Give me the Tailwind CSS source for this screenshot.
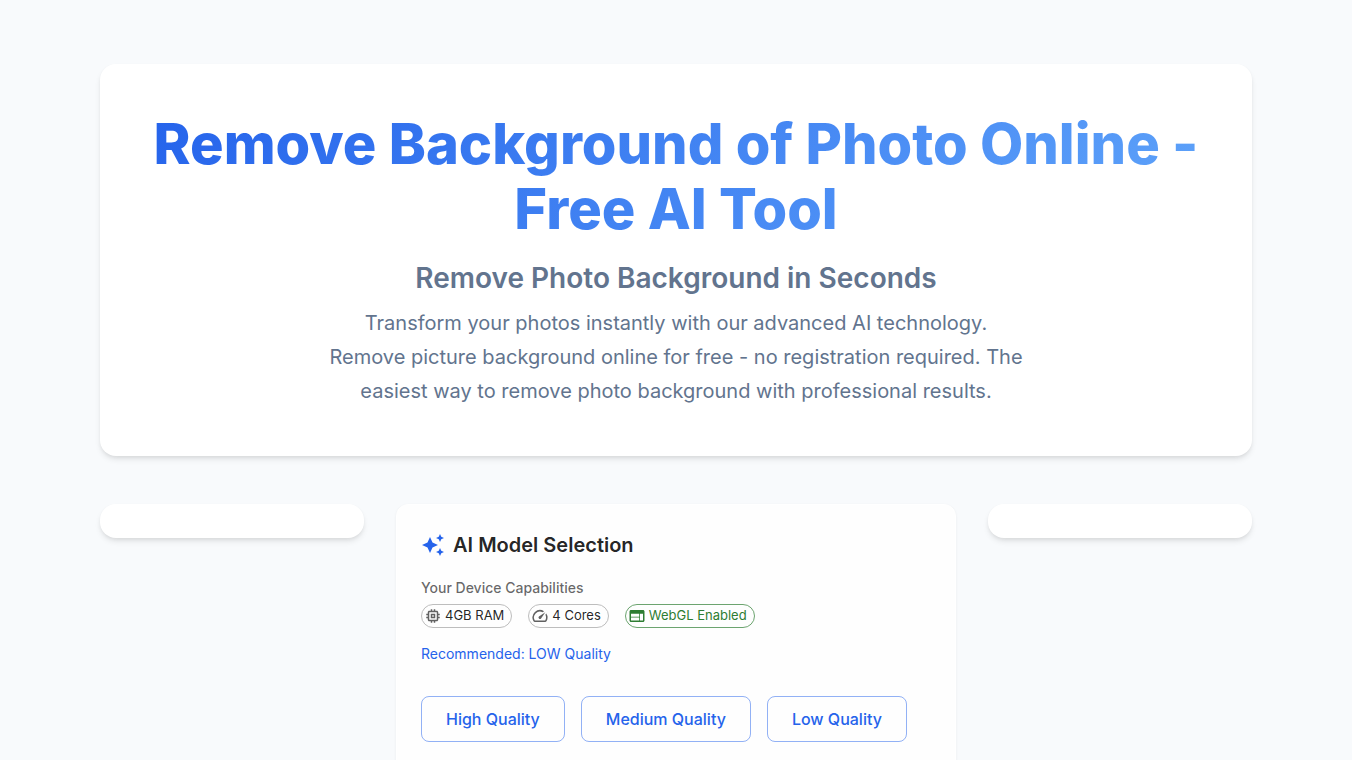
<!DOCTYPE html>
<html lang="en">
<head>
<meta charset="utf-8">
<meta name="viewport" content="width=device-width, initial-scale=1">
<title>Remove Background of Photo Online</title>
<script src="https://cdn.jsdelivr.net/npm/@tailwindcss/browser@4"></script>
</head>
<body class="min-h-screen bg-[#f8fafc] font-['Inter',sans-serif] text-black/87 antialiased">
<main class="mx-auto max-w-[1200px] px-6 pt-16">
  <header class="rounded-2xl bg-white p-12 text-center text-slate-500 shadow-[0_4px_6px_-1px_rgb(0_0_0/0.1),0_2px_4px_-1px_rgb(0_0_0/0.06)]">
    <h1 class="mb-4 bg-linear-[135deg] from-[#2563eb] to-[#60a5fa] bg-clip-text text-[56px] leading-[65px] font-extrabold text-transparent">Remove Background of Photo Online - Free AI Tool</h1>
    <h2 class="mb-2 text-[28px] leading-10 font-semibold">Remove Photo Background in Seconds</h2>
    <p class="mx-auto max-w-[700px] text-xl leading-[34px]">Transform your photos instantly with our advanced AI technology.<br>Remove picture background online for free - no registration required. The easiest way to remove photo background with professional results.</p>
  </header>

  <div class="mt-12 grid grid-cols-12 items-start gap-8">
    <aside class="col-span-3 rounded-2xl bg-white py-[17px] shadow-[0_4px_6px_-1px_rgb(0_0_0/0.1),0_2px_4px_-1px_rgb(0_0_0/0.06)]"></aside>

    <section class="col-span-6 rounded-xl border border-white bg-[#fefefe] px-6 pt-6 pb-12 shadow-[0_1px_3px_rgb(0_0_0/0.06)]">
      <h2 class="flex items-center gap-2 py-1 text-xl leading-6 font-semibold">
        <svg class="size-6 fill-[#2563eb]" viewBox="0 0 24 24" aria-hidden="true"><path d="m19 9 1.25-2.75L23 5l-2.75-1.25L19 1l-1.25 2.75L15 5l2.75 1.25zm-7.5.5L9 4 6.5 9.5 1 12l5.5 2.5L9 20l2.5-5.5L17 12zM19 15l-1.25 2.75L15 19l2.75 1.25L19 23l1.25-2.75L23 19l-2.75-1.25z"/></svg>
        AI Model Selection
      </h2>
      <h3 class="mt-[15px] text-sm leading-6 font-medium text-black/60">Your Device Capabilities</h3>
      <ul class="mt-1 flex flex-wrap gap-4 text-[13px]">
        <li class="flex h-6 items-center gap-[3px] rounded-full border border-[#bdbdbd] pr-[7px] pl-0.5">
          <svg class="size-[18px] fill-[#616161]" viewBox="0 0 24 24" aria-hidden="true"><path d="M15 9H9v6h6zm-2 4h-2v-2h2zm8-2V9h-2V7c0-1.1-.9-2-2-2h-2V3h-2v2h-2V3H9v2H7c-1.1 0-2 .9-2 2v2H3v2h2v2H3v2h2v2c0 1.1.9 2 2 2h2v2h2v-2h2v2h2v-2h2c1.1 0 2-.9 2-2v-2h2v-2h-2v-2zm-4 6H7V7h10z"/></svg>
          4GB RAM
        </li>
        <li class="flex h-6 items-center gap-[3px] rounded-full border border-[#bdbdbd] pr-[7px] pl-0.5">
          <svg class="size-[18px] fill-[#616161]" viewBox="0 0 24 24" aria-hidden="true"><path d="m20.38 8.57-1.23 1.85a8 8 0 0 1-.22 7.58H5.07A8 8 0 0 1 15.58 6.85l1.85-1.23A10 10 0 0 0 3.35 19a2 2 0 0 0 1.72 1h13.85a2 2 0 0 0 1.74-1 10 10 0 0 0-.27-10.44z"/><path d="M10.59 15.41a2 2 0 0 0 2.83 0l5.66-8.49-8.49 5.66a2 2 0 0 0 0 2.83"/></svg>
          4 Cores
        </li>
        <li class="flex h-6 items-center gap-[3px] rounded-full border border-[#2e7d32]/70 pr-[7px] pl-0.5 text-[#2e7d32]">
          <svg class="size-[18px] fill-current" viewBox="0 0 24 24" aria-hidden="true"><path d="M20 4H4c-1.1 0-1.99.9-1.99 2L2 18c0 1.1.9 2 2 2h16c1.1 0 2-.9 2-2V6c0-1.1-.9-2-2-2m-5 14H4v-4h11zm0-5H4V9h11zm5 5h-4V9h4z"/></svg>
          WebGL Enabled
        </li>
      </ul>
      <p class="mt-4 text-sm leading-5 text-[#2563eb]">Recommended: LOW Quality</p>
      <div class="mt-8 flex flex-wrap gap-4 leading-7 font-medium text-[#2563eb]">
        <button type="button" class="rounded-lg border border-[#2563eb]/50 px-6 py-2">High Quality</button>
        <button type="button" class="rounded-lg border border-[#2563eb]/50 px-6 py-2">Medium Quality</button>
        <button type="button" class="rounded-lg border border-[#2563eb]/50 px-6 py-2">Low Quality</button>
      </div>
    </section>

    <aside class="col-span-3 rounded-2xl bg-white py-[17px] shadow-[0_4px_6px_-1px_rgb(0_0_0/0.1),0_2px_4px_-1px_rgb(0_0_0/0.06)]"></aside>
  </div>
</main>
</body>
</html>
